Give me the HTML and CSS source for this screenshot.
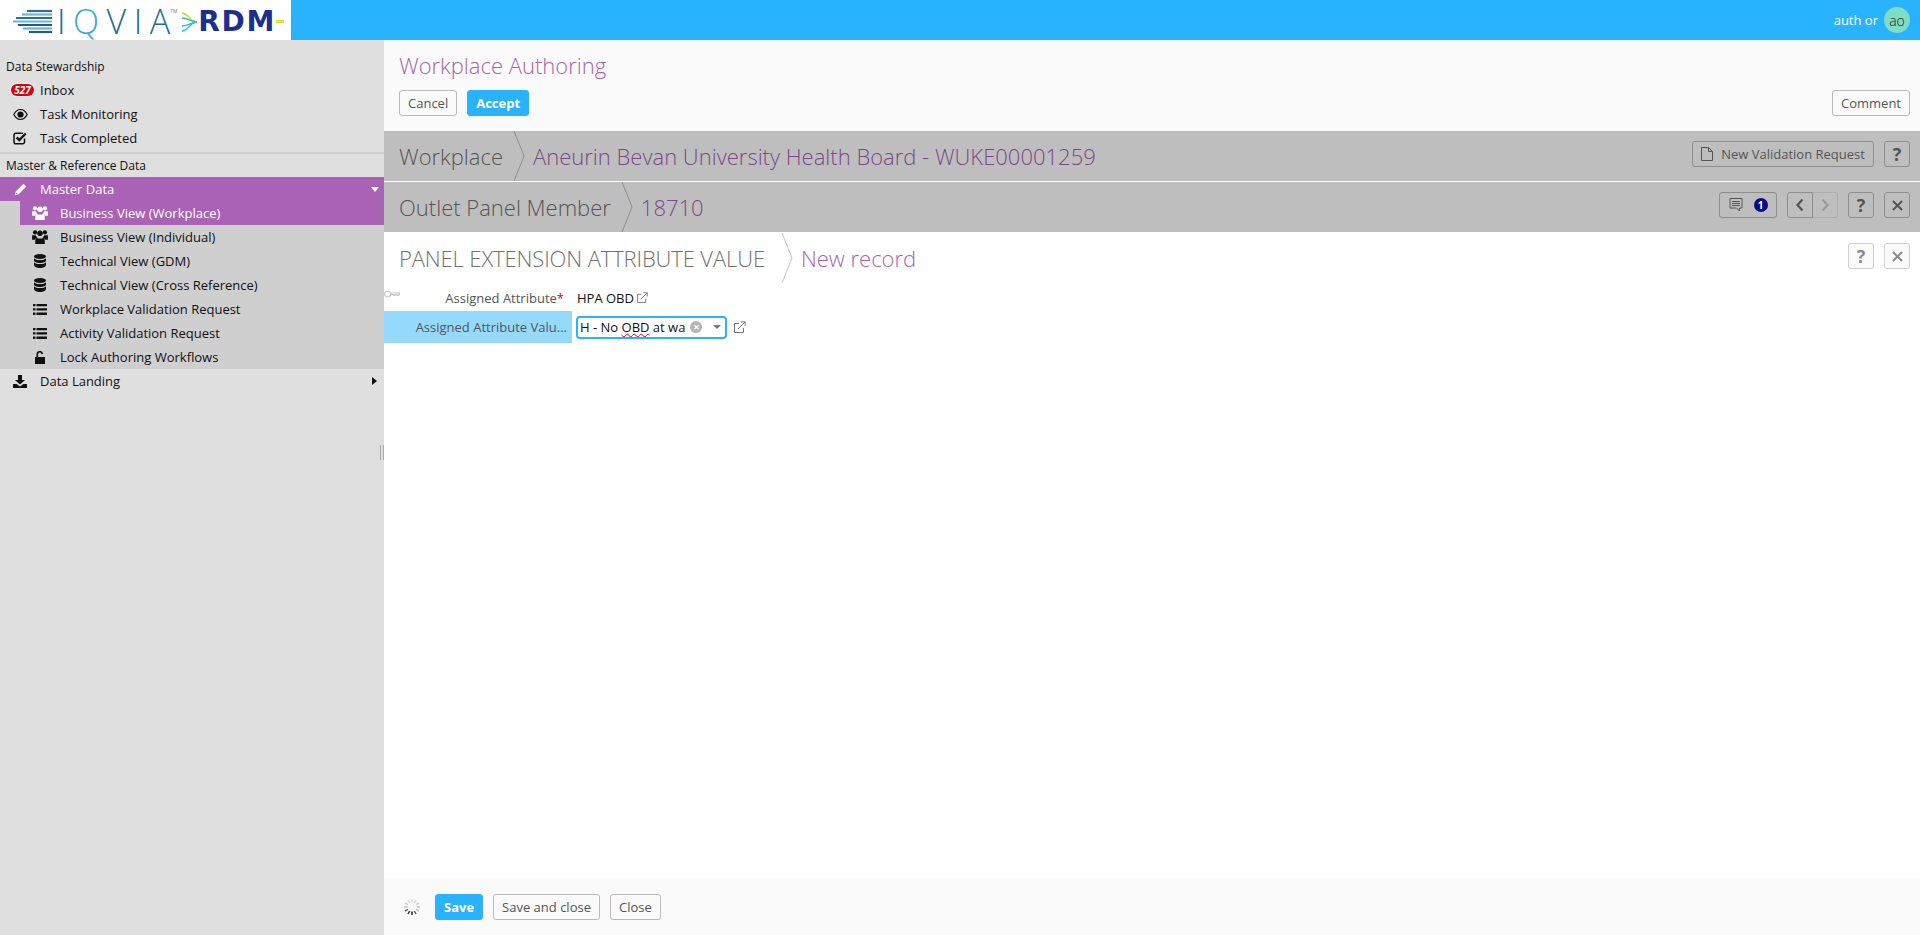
FILE: index.html
```html
<!DOCTYPE html>
<html lang="en">
<head>
<meta charset="utf-8">
<title>Workplace Authoring</title>
<link rel="stylesheet" href="styles.css">
</head>
<body>
<header class="topbar">
  <div class="logo">
    <svg class="logo-bars" viewBox="0 0 40 25" width="40" height="25">
      <g stroke-width="2.200" fill="none">
        <path d="M14 2H39" stroke="#2a6f96"/><path d="M9 5.500H39" stroke="#6fb3d8"/><path d="M3 9H39" stroke="#2a6f96"/>
        <path d="M0 12.500H39" stroke="#6fb3d8"/><path d="M5 16H39" stroke="#1f5d82"/><path d="M10 19.500H39" stroke="#6fb3d8"/><path d="M16 23H39" stroke="#1f5d82"/>
      </g>
    </svg>
    <span class="logo-iqvia">I<span class="logo-q">Q</span>VI<span class="logo-a">A</span></span><span class="logo-tm">TM</span>
    <svg class="logo-rays" viewBox="0 0 16 22" width="16" height="22">
      <g fill="none" stroke-width="1.500">
        <path d="M0 2C7 2 6 10 15 11" stroke="#c7d932"/><path d="M0 7C6 7 7 10 15 11" stroke="#49b98a"/>
        <path d="M0 15C6 15 7 12 15 11" stroke="#35b6d9"/><path d="M0 20C7 20 6 12 15 11" stroke="#2ec4e8"/>
      </g>
    </svg>
    <span class="logo-rdm">RDM</span><span class="logo-tail"></span>
  </div>
  <div class="user">
    <span>auth or</span><span class="avatar">ao</span>
  </div>
</header>

<div class="app">
  <aside class="sidebar">
    <div class="section first">Data Stewardship</div>
    <a class="item"><span class="ico"><span class="badge">527</span></span>Inbox</a>
    <a class="item"><span class="ico">
      <svg viewBox="0 0 16 12" width="15" height="11"><path fill="#111" fill-rule="evenodd" d="M8 0C4.500 0 1.600 2.200 0 6c1.600 3.800 4.500 6 8 6s6.400-2.200 8-6c-1.600-3.800-4.500-6-8-6zm0 1.200c2.700 0 4.900 1.900 6.500 4.800-1.600 2.900-3.800 4.800-6.500 4.800S3.100 8.900 1.500 6C3.100 3.100 5.300 1.200 8 1.200z"/><circle cx="8" cy="6" r="3.400" fill="#111"/></svg>
    </span>Task Monitoring</a>
    <a class="item"><span class="ico">
      <svg viewBox="0 0 14 14" width="14" height="14"><path fill="none" stroke="#111" stroke-width="1.500" d="M11.500 7.500V11a1.800 1.800 0 0 1-1.800 1.800H2.800A1.800 1.800 0 0 1 1 11V4a1.800 1.800 0 0 1 1.800-1.800H10"/><path fill="none" stroke="#111" stroke-width="2.400" d="M3.700 6.300l2.600 2.700 6.400-6.500"/></svg>
    </span>Task Completed</a>
    <div class="section second">Master &amp; Reference Data</div>
    <a class="item active"><span class="ico">
      <svg viewBox="0 0 14 14" width="13" height="13"><path fill="#fff" d="M10.300.7l3 3L5 12 .8 13.200 2 9zM1.700 12.300l2-.6-1.400-1.400z"/></svg>
    </span>Master Data<span class="caret down"></span></a>
    <div class="submenu">
      <a class="subitem active"><span class="ico">
        <svg viewBox="0 0 17 15" width="16" height="14"><g fill="#fff"><circle cx="3.200" cy="2.600" r="2.300"/><circle cx="13.800" cy="2.600" r="2.300"/><circle cx="8.500" cy="3.500" r="3"/><path d="M0 5.500h3.800c.5 1 1.100 1.700 1.900 2.200-1.300.7-2.200 1.500-2.600 2.800H0zM17 5.500h-3.800c-.5 1-1.100 1.700-1.900 2.200 1.300.7 2.200 1.500 2.600 2.800h3.100zM5 8.200c1 .7 2.200 1 3.500 1s2.500-.3 3.500-1c1 .7 1.600 2 1.600 3.500V15H3.400v-3.300C3.400 10.200 4 8.900 5 8.200z"/></g></svg>
      </span>Business View (Workplace)</a>
      <a class="subitem"><span class="ico">
        <svg viewBox="0 0 17 15" width="16" height="14"><g fill="#111"><circle cx="3.200" cy="2.600" r="2.300"/><circle cx="13.800" cy="2.600" r="2.300"/><circle cx="8.500" cy="3.500" r="3"/><path d="M0 5.500h3.800c.5 1 1.100 1.700 1.900 2.200-1.300.7-2.200 1.500-2.600 2.800H0zM17 5.500h-3.800c-.5 1-1.100 1.700-1.900 2.200 1.300.7 2.200 1.500 2.600 2.800h3.100zM5 8.200c1 .7 2.200 1 3.500 1s2.500-.3 3.500-1c1 .7 1.600 2 1.600 3.500V15H3.400v-3.300C3.400 10.200 4 8.900 5 8.200z"/></g></svg>
      </span>Business View (Individual)</a>
      <a class="subitem"><span class="ico">
        <svg viewBox="0 0 12 14" width="12" height="14"><g fill="#111"><ellipse cx="6" cy="2.500" rx="6" ry="2.500"/><path d="M0 4.200c1 1.300 3.400 1.900 6 1.900s5-.6 6-1.900V6.500C12 7.900 9.300 9 6 9S0 7.900 0 6.500zM0 8.200c1 1.300 3.400 1.900 6 1.900s5-.6 6-1.900v2.300C12 12.900 9.300 14 6 14s-6-1.100-6-3.500z"/></g></svg>
      </span>Technical View (GDM)</a>
      <a class="subitem"><span class="ico">
        <svg viewBox="0 0 12 14" width="12" height="14"><g fill="#111"><ellipse cx="6" cy="2.500" rx="6" ry="2.500"/><path d="M0 4.200c1 1.300 3.400 1.900 6 1.900s5-.6 6-1.900V6.500C12 7.900 9.300 9 6 9S0 7.900 0 6.500zM0 8.200c1 1.300 3.400 1.900 6 1.900s5-.6 6-1.900v2.300C12 12.900 9.300 14 6 14s-6-1.100-6-3.500z"/></g></svg>
      </span>Technical View (Cross Reference)</a>
      <a class="subitem"><span class="ico">
        <svg viewBox="0 0 14 11" width="14" height="11"><path fill="#111" d="M0 0h2.500v2.300H0zM3.500 0H14v2.300H3.500zM0 4.300h2.500v2.300H0zM3.500 4.300H14v2.300H3.500zM0 8.600h2.500v2.300H0zM3.500 8.600H14v2.300H3.500z"/></svg>
      </span>Workplace Validation Request</a>
      <a class="subitem"><span class="ico">
        <svg viewBox="0 0 14 11" width="14" height="11"><path fill="#111" d="M0 0h2.500v2.300H0zM3.500 0H14v2.300H3.500zM0 4.300h2.500v2.300H0zM3.500 4.300H14v2.300H3.500zM0 8.600h2.500v2.300H0zM3.500 8.600H14v2.300H3.500z"/></svg>
      </span>Activity Validation Request</a>
      <a class="subitem"><span class="ico">
        <svg viewBox="0 0 10 13" width="10" height="13"><path fill="#111" d="M0 6h10v7H0z"/><path fill="none" stroke="#111" stroke-width="1.600" d="M2.300 6.500V3.300a2.500 2.500 0 0 1 5-.2"/></svg>
      </span>Lock Authoring Workflows</a>
    </div>
    <a class="item"><span class="ico">
      <svg viewBox="0 0 14 13" width="14" height="13"><path fill="#111" d="M5 0h4v5h3L7 9.500 2 5h3zM0 9h3.500L7 11.500 10.500 9H14v4H0z"/></svg>
    </span>Data Landing<span class="caret right"></span></a>
    <span class="splitter"></span>
  </aside>

  <main class="content">
    <section class="page-head">
      <h1>Workplace Authoring</h1>
      <div class="toolbar">
        <button class="btn">Cancel</button>
        <button class="btn primary">Accept</button>
        <button class="btn push">Comment</button>
      </div>
    </section>

    <section class="crumb grey">
      <span class="crumb-type">Workplace</span>
      <svg class="chev" viewBox="0 0 12 50" width="12" height="50"><path d="M1 0l10 25L1 50" fill="none" stroke="#8e8e8e"/></svg>
      <span class="crumb-val">Aneurin Bevan University Health Board - WUKE00001259</span>
      <div class="crumb-tools">
        <button class="btn ghost wide">
          <svg viewBox="0 0 12 14" width="12" height="14"><path fill="none" stroke="#555" d="M.5.500h7l4 4v9H.500zM7.500.500v4h4"/></svg>
          New Validation Request
        </button>
        <button class="btn ghost square help">?</button>
      </div>
    </section>

    <section class="crumb grey">
      <span class="crumb-type">Outlet Panel Member</span>
      <svg class="chev" viewBox="0 0 12 50" width="12" height="50"><path d="M1 0l10 25L1 50" fill="none" stroke="#8e8e8e"/></svg>
      <span class="crumb-val">18710</span>
      <div class="crumb-tools">
        <button class="btn ghost comments">
          <svg viewBox="0 0 14 14" width="14" height="14"><path fill="none" stroke="#555" d="M1 .500h12v9.500h-2.500v3l-3-3H1z"/><path stroke="#555" d="M3 3.500h8M3 5.500h8M3 7.500h8"/></svg>
          <span class="count">1</span>
        </button>
        <div class="pager">
          <button class="btn ghost square pg-left"><svg viewBox="0 0 10 14" width="10" height="14"><path fill="none" stroke="#555" stroke-width="2.200" d="M7.500 1.500L2.500 7l5 5.500"/></svg></button>
          <button class="btn ghost square pg-right" disabled><svg viewBox="0 0 10 14" width="10" height="14"><path fill="none" stroke="#9c9c9c" stroke-width="2.200" d="M2.500 1.500L7.500 7l-5 5.500"/></svg></button>
        </div>
        <button class="btn ghost square help">?</button>
        <button class="btn ghost square x"><svg viewBox="0 0 12 12" width="11" height="11"><path stroke="#555" stroke-width="2.200" d="M1 1l10 10M11 1L1 11"/></svg></button>
      </div>
    </section>

    <section class="panel">
      <div class="crumb white">
        <span class="crumb-type upper">PANEL EXTENSION ATTRIBUTE VALUE</span>
        <svg class="chev chev-panel" viewBox="0 0 12 50" width="12" height="50"><path d="M1 0l10 25L1 50" fill="none" stroke="#c4c4c4"/></svg>
        <span class="crumb-val light">New record</span>
        <div class="crumb-tools">
          <button class="btn square help pale">?</button>
          <button class="btn square x pale"><svg viewBox="0 0 12 12" width="11" height="11"><path stroke="#8a8a8a" stroke-width="2.200" d="M1 1l10 10M11 1L1 11"/></svg></button>
        </div>
      </div>

      <form class="form">
        <svg class="key" viewBox="0 0 16 8" width="16" height="8"><path fill="none" stroke="#c4c4c4" stroke-width="1.200" d="M6.500 3H15.500v1.500l-1.500 1-1-1-1 1-1-1-1 1-1-1H6.500"/><circle cx="3.700" cy="4" r="3" fill="none" stroke="#c4c4c4" stroke-width="1.200"/></svg>
        <div class="row first-row">
          <label class="lbl">Assigned Attribute<span class="req">*</span></label>
          <div class="val">HPA OBD<svg class="ext" viewBox="0 0 12 12" width="11" height="11"><use href="#ext"/></svg></div>
        </div>
        <div class="row second-row">
          <label class="lbl hl">Assigned Attribute Valu...</label>
          <div class="val">
            <div class="select">
              <span class="sel-text">H - No <span class="typo">OBD</span> at wa</span>
              <span class="clear">×</span>
              <span class="sel-caret"></span>
            </div>
            <svg class="ext big" viewBox="0 0 12 12" width="12" height="12"><use href="#ext"/></svg>
          </div>
        </div>
      </form>

      <div class="spacer"></div>

      <footer class="foot">
        <svg class="spin" viewBox="0 0 18 18" width="18" height="18">
          <g stroke-width="1.500">
            <path d="M9 1v3.500" stroke="#d8d8d8"/><path d="M13 2l-1.700 3" stroke="#d4d4d4"/><path d="M16 5l-3 1.700" stroke="#cfcfcf"/><path d="M17 9h-3.500" stroke="#c8c8c8"/><path d="M16 13l-3-1.700" stroke="#bdbdbd"/><path d="M13 16l-1.700-3" stroke="#555"/><path d="M9 17v-3.500" stroke="#222"/><path d="M5 16l1.700-3" stroke="#333"/><path d="M2 13l3-1.700" stroke="#666"/><path d="M1 9h3.500" stroke="#bbb"/><path d="M2 5l3 1.700" stroke="#ccc"/><path d="M5 2l1.700 3" stroke="#d8d8d8"/>
          </g>
        </svg>
        <button class="btn primary">Save</button>
        <button class="btn">Save and close</button>
        <button class="btn">Close</button>
      </footer>
    </section>
  </main>
</div>

<svg class="defs" width="0" height="0"><defs>
  <g id="ext" fill="none" stroke="#777"><path d="M9.500 7v4.500H.500v-9H5"/><path d="M4 8l7-7M7 .800h4.200V5"/></g>
</defs></svg>
</body>
</html>
```

FILE: styles.css
```css
* { box-sizing: border-box; }
html, body { margin: 0; height: 100%; overflow: hidden; }
body { font-family: "Open Sans", "Liberation Sans", sans-serif; font-size: 13px; color: #111; background: #fff; display: flex; flex-direction: column; }

.topbar { height: 40px; background: #29b3ff; display: flex; align-items: center; justify-content: space-between; flex: none; }
.logo { width: 291px; height: 40px; background: #fff; display: flex; align-items: center; padding: 3px 0 0 13px; flex: none; }
.logo-bars { flex: none; margin-right: 4px; }
.logo-iqvia { font-family: "Open Sans", sans-serif; font-weight: 300; font-size: 34px; letter-spacing: 7.500px; color: #1f6f99; line-height: 37px; height: 37px; display: block; white-space: nowrap; }
.logo-q { color: #3ba7d6; }
.logo-a { letter-spacing: 0; }
.logo-tm { font-size: 5px; line-height: 6px; color: #777; align-self: flex-start; margin-top: 5px; width: 8px; }
.logo-rays { flex: none; margin-left: 4px; }
.logo-rdm { font-family: "DejaVu Sans", sans-serif; font-weight: 700; font-size: 28px; color: #1c2f8f; line-height: 37px; letter-spacing: 1.800px; }
.logo-tail { width: 8px; height: 3px; background: #dfe23a; flex: none; }
.user { display: flex; align-items: center; gap: 6px; color: #fff; padding-right: 10px; }
.avatar { width: 26px; height: 26px; border-radius: 50%; background: #80dcc4; color: #222; font-size: 14px; display: flex; align-items: center; justify-content: center; font-weight: 300; }

.app { flex: 1; display: flex; min-height: 0; }

.sidebar { width: 384px; flex: none; background: #dfdfdf; position: relative; }
.section { font-size: 12px; padding-left: 6px; height: 23px; line-height: 23px; }
.section.first { margin-top: 15px; }
.section.second { border-top: 2px solid #d0d0d0; height: 25px; margin-top: 2px; }
.item, .subitem { display: flex; align-items: center; height: 24px; color: #111; position: relative; }
.item .ico { width: 40px; }
.ico { display: flex; align-items: center; justify-content: center; flex: none; }
.item.active { background: #a962b5; color: #fff; }
.submenu { background: #cfcfcf; padding-left: 20px; }
.subitem .ico { width: 40px; }
.subitem.active { background: #a962b5; color: #fff; }
.badge { background: #d9000d; color: #fff; font-size: 10px; font-weight: 700; font-style: italic; line-height: 12px; height: 12px; width: 23px; border-radius: 7px; text-align: center; margin-left: 5px; box-shadow: 0 0 0 1px rgba(255,255,255,.6); }
.caret { position: absolute; width: 0; height: 0; }
.caret.down { right: 5px; top: 10px; border-left: 4px solid transparent; border-right: 4px solid transparent; border-top: 5px solid #fff; }
.caret.right { right: 7px; top: 8px; border-top: 4px solid transparent; border-bottom: 4px solid transparent; border-left: 5px solid #111; }
.splitter { position: absolute; right: 0; top: 405px; width: 4px; height: 15px; border-left: 1px solid #aaa; border-right: 1px solid #aaa; }

.content { flex: 1; display: flex; flex-direction: column; min-width: 0; }
.page-head { height: 91px; background: #fafafa; padding: 12px 10px 0 15px; flex: none; }
h1 { margin: 0; font-size: 22px; font-weight: 300; color: #a962b5; line-height: 27px; }
.toolbar { display: flex; gap: 10px; margin-top: 11px; }
.push { margin-left: auto; }

.btn { height: 26px; font-family: inherit; font-size: 13px; color: #555; background: #fafafa; border: 1px solid #bbb; border-radius: 3px; padding: 0 8px; display: inline-flex; align-items: center; justify-content: center; line-height: 1; }
.btn.primary { background: #29b3ff; border-color: #29b3ff; color: #fff; font-weight: 700; padding: 0 8px; }
.btn.ghost { background: transparent; border-color: #8e8e8e; color: #555; gap: 6px; }
.btn.wide { width: 182px; gap: 8px; padding: 0; }
.btn.square { width: 26px; padding: 0; }
.help { font-size: 18px; font-weight: 700; color: #555; }
.help.pale { color: #8a8a8a; }
.pale { background: #fafafa; border-color: #d0d0d0; }
.btn.comments { width: 58px; padding: 0; gap: 11px; }
.count { width: 14px; height: 14px; border-radius: 50%; background: #0a0a86; color: #fff; font-size: 10px; font-weight: 700; display: flex; align-items: center; justify-content: center; }
.pager { display: flex; }
.btn.pg-left { border-radius: 3px 0 0 3px; }
.btn.pg-right { border-radius: 0 3px 3px 0; border-left: 0; width: 25px; border-color: #adadad; }

.crumb { height: 50px; display: flex; align-items: center; padding: 0 10px 0 15px; flex: none; }
.crumb.grey { background: #bebebe; margin-bottom: 1px; }
.crumb-type { font-size: 22px; font-weight: 300; color: #555; }
.crumb-type.upper { color: #707070; letter-spacing: -.12px; }
.chev { margin: 0 8px 0 10px; flex: none; }
.chev.chev-panel { margin: 0 8px 0 16px; }
.crumb-val { font-size: 22px; font-weight: 300; color: #7a4a85; }
.crumb-val.light { color: #a962b5; }
.crumb-tools { margin-left: auto; display: flex; gap: 10px; align-self: flex-start; margin-top: 10px; }

.panel { flex: 1; display: flex; flex-direction: column; min-height: 0; background: #fff; }
.form { position: relative; padding-top: 1px; flex: none; }
.key { position: absolute; left: 0; top: 7px; }
.row { display: grid; grid-template-columns: 188px 1fr; align-items: center; height: 32px; }
.row.first-row { height: 27px; }
.lbl { padding-right: 8px; color: #555; font-size: 13px; height: 100%; display: flex; align-items: center; justify-content: flex-end; white-space: nowrap; }
.lbl.hl { background: #96d9ff; padding-right: 5px; }
.req { color: #d9000d; }
.val { display: flex; align-items: center; color: #111; margin-left: 5px; }
.second-row .val { margin-left: 4px; }
.ext { margin-left: 3px; }
.ext.big { margin-left: 7px; }
.select { width: 151px; height: 23px; border: 2px solid #29b3ff; border-radius: 4px; display: flex; align-items: center; padding-left: 2px; background: #fff; }
.sel-text { white-space: nowrap; }
.typo { text-decoration: underline wavy #e00012 1px; text-underline-offset: 1px; }
.clear { width: 12px; height: 12px; border-radius: 50%; background: #b5b5b5; color: #fff; font-size: 11px; font-weight: 700; line-height: 12px; text-align: center; margin-left: 5px; flex: none; }
.sel-caret { width: 0; height: 0; border-left: 4px solid transparent; border-right: 4px solid transparent; border-top: 4px solid #777; margin-left: 11px; flex: none; }
.spacer { flex: 1; }
.foot { height: 56px; background: #fafafa; display: flex; align-items: center; gap: 10px; padding: 0 0 0 19px; flex: none; }
.spin { margin-right: 4px; flex: none; }
.defs { position: absolute; }
```
